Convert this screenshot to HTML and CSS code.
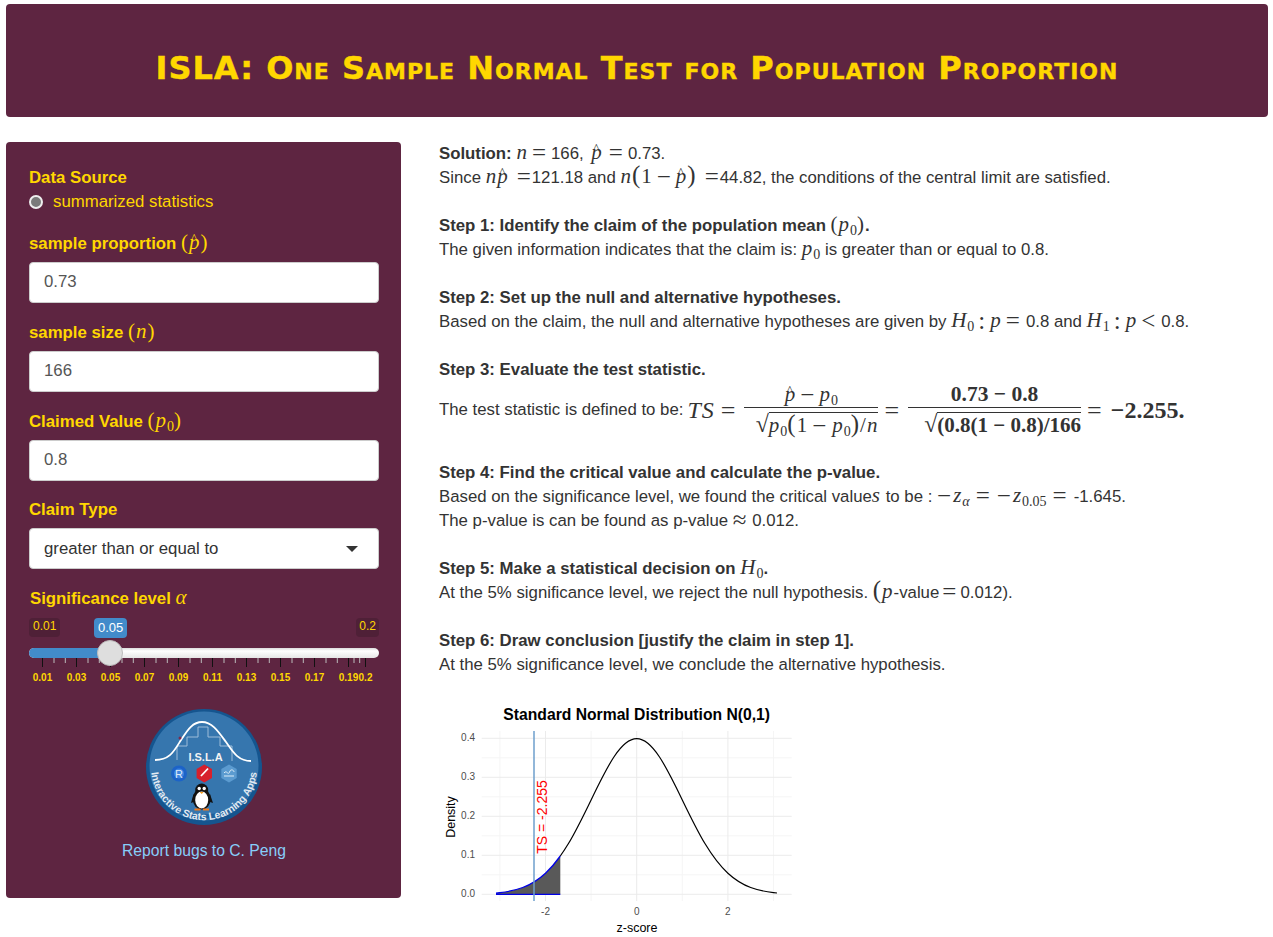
FILE: index.html
```html
<!DOCTYPE html>
<html lang="en">
<head>
<meta charset="utf-8">
<title>ISLA: One Sample Normal Test for Population Proportion</title>
<link rel="stylesheet" href="styles.css">
</head>
<body>
<header class="banner"><h1>ISLA: One Sample Normal Test for Population Proportion</h1></header>
<div class="layout">
  <aside class="panel">
    <div class="group-radio">
      <div class="lbl">Data Source</div>
      <div class="radio-row"><span class="radio"></span><span>summarized statistics</span></div>
    </div>
    <div class="group">
      <div class="lbl lbl-m">sample proportion <span class="m m-side"><span class="r">(</span><span class="hat">p</span><span class="r">)</span></span></div>
      <div class="input">0.73</div>
    </div>
    <div class="group">
      <div class="lbl lbl-m">sample size <span class="m m-side"><span class="r">(</span>n<span class="r">)</span></span></div>
      <div class="input">166</div>
    </div>
    <div class="group">
      <div class="lbl lbl-m">Claimed Value <span class="m m-side"><span class="r">(</span>p<sub class="s">0</sub><span class="r">)</span></span></div>
      <div class="input">0.8</div>
    </div>
    <div class="group group-select">
      <div class="lbl lbl-m lbl-select">Claim Type</div>
      <div class="input select"><span class="select-text">greater than or equal to</span><span class="caret"></span></div>
    </div>
    <div class="lbl lbl-m lbl-sig">Significance level <span class="m m-side">α</span></div>
    <div class="slider">
      <div class="bubbles">
        <span class="bubble">0.01</span>
        <span class="bubble bubble-on">0.05</span>
        <span class="bubble bubble-end">0.2</span>
      </div>
      <div class="track"><div class="track-fill"></div><div class="handle"></div></div>
      <svg class="ticks" viewBox="0 0 350 34" width="350" height="34">
        <path class="tick-minor" d="M25 0v5M36.300 0v5M59 0v5M70.300 0v5M93 0v5M104.300 0v5M127 0v5M138.300 0v5M161 0v5M172.300 0v5M195 0v5M206.300 0v5M229 0v5M240.300 0v5M263 0v5M274.300 0v5M297 0v5M308.300 0v5M325 0v5M330.700 0v5"/>
        <path class="tick-major" d="M13.500 0v9M47.500 0v9M81.500 0v9M115.500 0v9M149.500 0v9M183.500 0v9M217.500 0v9M251.500 0v9M285.500 0v9M319.500 0v9M336.500 0v9"/>
        <g class="tick-text">
          <text x="13.500" y="23">0.01</text><text x="47.500" y="23">0.03</text><text x="81.500" y="23">0.05</text><text x="115.500" y="23">0.07</text><text x="149.500" y="23">0.09</text><text x="183.500" y="23">0.11</text><text x="217.500" y="23">0.13</text><text x="251.500" y="23">0.15</text><text x="285.500" y="23">0.17</text><text x="319.500" y="23">0.19</text><text x="336.500" y="23">0.2</text>
        </g>
      </svg>
    </div>
    <svg class="logo" viewBox="0 0 116 116" width="116" height="116">
      <defs>
        <path id="arc" d="M6 48A53 53 0 1 0 110 48"/>
      </defs>
      <circle cx="58" cy="58" r="58" fill="#15558f"/>
      <circle cx="58" cy="57" r="54.500" fill="#3676ae"/>
      <path d="M12 84A54 54 0 0 0 104 84A60 60 0 0 1 12 84Z" fill="#1f619c"/>
      <path d="M31 51V37H41V28H52V18H62V28H74V37H86V52" fill="none" stroke="#9dbcd9" stroke-width="1"/>
      <path d="M9 51C24 51 28 42 35 31C41 22 46 13 56 13C66 13 72 22 80 33C87 43 92 52 105 52" fill="none" stroke="#fff" stroke-width="1.800"/>
      <circle cx="34" cy="29" r="1.500" fill="#7c2a4d"/>
      <text x="59.500" y="52" class="logo-title">I.S.L.A</text>
      <circle cx="33" cy="64.500" r="8" fill="#1c63c8"/>
      <circle cx="33" cy="64.500" r="5" fill="#3f86e0"/>
      <text x="33" y="68.500" class="logo-r">R</text>
      <path d="M58.300 55.500L66 60V69L58.300 73.500L50.600 69V60Z" fill="#d7202c"/>
      <path d="M55 67L62 59.500" stroke="#fff" stroke-width="1.800"/>
      <path d="M83 55.500L90.700 60V69L83 73.500L75.300 69V60Z" fill="#5b9bd0"/>
      <path d="M78 64C81 60 82 68 84 62C85 60 88 61 88 63M78 67H88" fill="none" stroke="#dcecf8" stroke-width="1"/>
      <text class="logo-arc"><textPath href="#arc" startOffset="50%">Interactive Stats Learning Apps</textPath></text>
      <ellipse cx="55.700" cy="90" rx="9" ry="10.500" fill="#111"/>
      <circle cx="55.700" cy="81" r="6.500" fill="#111"/>
      <path d="M47.500 85L45 94L50 92ZM64 85L67 94L61 92Z" fill="#111"/>
      <ellipse cx="55.700" cy="91" rx="6.500" ry="8.500" fill="#fff"/>
      <circle cx="53.200" cy="79.500" r="1.700" fill="#fff"/><circle cx="58.200" cy="79.500" r="1.700" fill="#fff"/>
      <path d="M53.700 83H57.700L55.700 85Z" fill="#f39a1c"/>
      <path d="M48.500 99.500H54.500V101.500H48.500ZM57 99.500H63V101.500H57Z" fill="#f07a1c"/>
    </svg>
    <div class="report">Report bugs to C. Peng</div>
  </aside>
  <main class="content">
    <p class="para"><b>Solution:</b> <span class="m">n</span><span class="m r op">=</span>166, <span class="m hat hat-g">p</span><span class="m r op">=</span>0.73.<br>
    Since <span class="m">n<span class="hat">p</span></span><span class="m r op op-l">=</span>121.18 and <span class="m">n<span class="r big">(</span><span class="r">1</span><span class="r op">−</span><span class="hat">p</span><span class="r big">)</span></span><span class="m r op op-l">=</span>44.82, the conditions of the central limit are satisfied.</p>
    <p class="para"><b>Step 1: Identify the claim of the population mean <span class="m m-b"><span class="r">(</span>p<sub class="s">0</sub><span class="r">)</span></span>.</b><br>
    The given information indicates that the claim is: <span class="m">p<sub class="s">0</sub></span> is greater than or equal to 0.8.</p>
    <p class="para"><b>Step 2: Set up the null and alternative hypotheses.</b><br>
    Based on the claim, the null and alternative hypotheses are given by <span class="m">H<sub class="s">0</sub><span class="r op">:</span>p<span class="r op op-n">=</span></span>0.8 and <span class="m">H<sub class="s">1</sub><span class="r op">:</span>p<span class="r op op-n">&lt;</span></span>0.8.</p>
    <div class="para">
      <div class="line"><b>Step 3: Evaluate the test statistic.</b></div>
      <div class="formula">
        <span>The test statistic is defined to be:</span>
        <span class="m m-f">TS</span><span class="m r m-f fop">=</span><span class="frac frac-a">
          <span class="num"><span class="m hat">p</span><span class="m r op">−</span><span class="m">p<sub class="s">0</sub></span></span>
          <span class="den"><span class="rad m r">√</span><span class="under m">p<sub class="s">0</sub><span class="r big">(</span><span class="r">1</span><span class="r op op-n">−</span>p<sub class="s">0</sub><span class="r big">)</span><span class="r">/</span>n</span></span>
        </span><span class="m r m-f fop">=</span><span class="frac frac-b">
          <span class="num m r strong tight">0.73 − 0.8</span>
          <span class="den"><span class="rad m r">√</span><span class="under m r strong tight">(0.8(1 − 0.8)/166</span></span>
        </span><span class="m r m-f fop">=</span><span class="m r m-f strong tight fnum">−2.255.</span>
      </div>
    </div>
    <p class="para"><b>Step 4: Find the critical value and calculate the p-value.</b><br>
    Based on the significance level, we found the critical value<span class="m">s</span> to be : <span class="m"><span class="r minus">−</span>z<sub class="s s-i">α</sub><span class="r op op-w">=</span><span class="r minus">−</span>z<sub class="s">0.05</sub><span class="r op op-w">=</span></span>-1.645.<br>
    The p-value is can be found as p-value <span class="m r wide">≈</span> 0.012.</p>
    <p class="para"><b>Step 5: Make a statistical decision on <span class="m m-b">H<sub class="s">0</sub></span>.</b><br>
    At the 5% significance level, we reject the null hypothesis. <span class="m"><span class="r big">(</span>p</span>-value<span class="m r op op-t">=</span>0.012).</p>
    <p class="para"><b>Step 6: Draw conclusion [justify the claim in step 1].</b><br>
    At the 5% significance level, we conclude the alternative hypothesis.</p>
    <svg class="plot" viewBox="439 700 361 237" width="361" height="237">
      <path class="grid-minor" d="M481.700 873.800H791.700M481.700 834.800H791.700M481.700 795.800H791.700M481.700 756.800H791.700M499.900 730V900M591.100 730V900M682.300 730V900M773.500 730V900"/>
      <path class="grid-major" d="M481.700 893.300H791.700M481.700 854.300H791.700M481.700 815.300H791.700M481.700 776.300H791.700M481.700 737.300H791.700M545.500 730V900M636.700 730V900M727.900 730V900"/>
      <path fill="#595959" d="M496 892.200L499.900 891.600C507.500 890.740 515.100 889.340 522.700 886.500C530.300 883.660 537.900 879.220 545.500 872.200C550.430 867.640 555.370 861.930 560.300 855V893.300H496Z"/>
      <path fill="none" stroke="#000" stroke-width="1.200" d="M560.300 855C562.970 851.250 565.630 847.230 568.300 842.800C575.900 830.170 583.500 814.630 591.100 798.900C598.700 783.170 606.300 767.440 613.900 756C621.500 744.560 629.100 737.700 636.700 737.700C644.300 737.700 651.900 744.560 659.500 756C667.100 767.440 674.700 783.170 682.300 798.900C689.900 814.630 697.500 830.170 705.100 842.800C712.700 855.430 720.300 865.180 727.900 872.200C735.500 879.220 743.100 883.660 750.700 886.500C758.300 889.340 765.900 890.740 773.500 891.600L777 892"/>
      <path fill="none" stroke="#0000e6" stroke-width="1.300" d="M496 892.200L499.900 891.600C507.500 890.740 515.100 889.340 522.700 886.500C530.300 883.660 537.900 879.220 545.500 872.200C550.430 867.640 555.370 861.930 560.300 855M496 893.300H560.300"/>
      <path fill="none" stroke="#6e9fcc" stroke-width="1.500" d="M534 730V900"/>
      <g class="ax-y"><text x="475" y="896">0.0</text><text x="475" y="857">0.1</text><text x="475" y="818">0.2</text><text x="475" y="779">0.3</text><text x="475" y="740">0.4</text></g>
      <g class="ax-x"><text x="545.500" y="914">-2</text><text x="636.700" y="914">0</text><text x="727.900" y="914">2</text></g>
      <text class="plot-title" x="636.700" y="719">Standard Normal Distribution N(0,1)</text>
      <text class="ax-name" x="637" y="931">z-score</text>
      <text class="ax-name" transform="translate(455 816) rotate(-90)">Density</text>
      <text class="plot-ts" transform="translate(547 816) rotate(-90)">TS = -2.255</text>
    </svg>
  </main>
</div>
</body>
</html>
```

FILE: styles.css
```css
* { box-sizing: border-box; }
html, body { margin: 0; padding: 0; }
body {
  background: #fff;
  color: #333;
  font-family: "Liberation Sans", Arial, sans-serif;
  font-size: 16.800px;
  line-height: 24px;
  width: 1273px;
  height: 937px;
  overflow: hidden;
  padding: 4px 5px 0 6px;
}
.banner {
  height: 113px;
  background: #5e2541;
  border-radius: 4px;
  padding-top: 14px;
  display: flex;
  align-items: center;
  justify-content: center;
}
.banner h1 {
  margin: 0;
  color: #ffd700;
  font-family: "DejaVu Sans", Verdana, sans-serif;
  font-variant: small-caps;
  font-weight: 700;
  font-size: 32px;
  letter-spacing: 1px;
  line-height: 36px;
  -webkit-text-stroke: .4px #ffd700;
}
.layout {
  display: flex;
  margin-top: 25px;
  align-items: flex-start;
}
.panel {
  width: 395px;
  height: 756px;
  flex: none;
  background: #5e2541;
  border-radius: 4px;
  padding: 24px 22px 0 23px;
  color: #ffd700;
  display: flex;
  flex-direction: column;
}
.group-radio { height: 63px; }
.lbl { font-weight: 700; line-height: 23px; }
.lbl-m { height: 28px; line-height: 29px; margin-bottom: 5px; }
.lbl-select { margin-bottom: 4px; line-height: 28px; }
.radio-row { display: flex; align-items: center; gap: 10px; line-height: 24px; margin-top: 1px; }
.radio {
  width: 14px;
  height: 14px;
  border-radius: 50%;
  background: #7a7a7a;
  border: 2px solid #eee;
}
.group { margin-bottom: 15px; }
.group-select { margin-bottom: 16px; }
.input {
  height: 41px;
  background: #fff;
  border: 1px solid #ccc;
  border-radius: 4px;
  color: #555;
  padding: 0 14px;
  line-height: 38px;
}
.select { display: flex; justify-content: space-between; align-items: center; color: #333; }
.select-text { line-height: 38px; }
.caret {
  width: 0;
  height: 0;
  border-left: 6.500px solid transparent;
  border-right: 6.500px solid transparent;
  border-top: 6px solid #333;
  margin-right: 6px;
}
.lbl-sig { margin-bottom: 0; padding-left: 1px; line-height: 27px; }
.slider { position: relative; height: 80px; padding-top: 5px; }
.bubbles { display: flex; justify-content: space-between; position: relative; height: 20px; }
.bubble {
  background: #4f2037;
  border-radius: 4px;
  font-size: 12px;
  line-height: 16px;
  height: 19px;
  padding: 0 4px;
  color: #ffd700;
}
.bubble-on {
  position: absolute;
  left: 65px;
  background: #428bca;
  color: #fff;
  height: 20px;
  line-height: 19px;
  padding: 0 4px;
  font-size: 13px;
}
.bubble-end { padding: 0 3px; margin-left: auto; }
.track {
  position: relative;
  height: 10px;
  margin-top: 10px;
  border-radius: 5px;
  background: linear-gradient(#dcdcdc, #fff 30%, #e6e6e6);
}
.track-fill {
  width: 81px;
  height: 10px;
  background: #428bca;
  border-radius: 5px 0 0 5px;
}
.handle {
  position: absolute;
  left: 68px;
  top: -8px;
  width: 26px;
  height: 26px;
  border-radius: 50%;
  background: #dedede;
  border: 1px solid #bdbdbd;
}
.ticks { display: block; }
.tick-major { stroke: #111; fill: none; }
.tick-minor { stroke: #bbb; fill: none; }
.tick-text text {
  fill: #ffd700;
  font-size: 10px;
  font-weight: 700;
  text-anchor: middle;
}
.logo { display: block; margin: 16px 0 0 117px; flex: none; }
.logo-title { fill: #f3f3f3; font-size: 11px; font-weight: 700; text-anchor: middle; }
.logo-r { fill: #dfe9f7; font-size: 11px; text-anchor: middle; font-family: "Liberation Sans", sans-serif; }
.logo-arc { fill: #e2eaf2; font-size: 10.400px; font-weight: 700; text-anchor: middle; }
.report {
  color: #87cefa;
  font-size: 15.700px;
  text-align: center;
  margin-top: 14px;
}
.content {
  margin-left: 38px;
  flex: 1;
  display: flex;
  flex-direction: column;
  gap: 24px;
}
.para { margin: 0; }
.line { height: 24px; }
.formula {
  height: 55px;
  display: flex;
  align-items: center;
  white-space: pre;
}
.m {
  font-family: "Liberation Serif", "Times New Roman", serif;
  font-style: italic;
  font-size: 21px;
  letter-spacing: 1px;
  line-height: 0;
}
.m-side { font-weight: 400; }
.m-b { font-weight: 400; }
.m-f { margin-left: 4px; font-size: 24px; line-height: 24px; }
.fop { margin: 2px 8px 0 6px; font-size: 26px; }
.r { font-style: normal; font-weight: 400; }
.strong { font-weight: 700; }
.tight { letter-spacing: 0; }
.big { font-size: 25px; line-height: 0; }
.op { margin: 0 4px; font-size: 25px; vertical-align: -1.500px; }
.op-l { margin-right: 0; margin-left: 8px; }
.op-n { margin-right: 5px; }
.op-w { margin: 0 6px; }
.op-t { margin: 0 3px; }
.minus { font-size: 25px; margin-right: 1px; vertical-align: -1.500px; }
.wide { font-size: 25px; vertical-align: -1.500px; }
.fnum { margin-left: 0; }
.s { font-size: 14px; line-height: 0; vertical-align: -4px; letter-spacing: 0; font-style: normal; }
.s-i { font-style: italic; }
.hat { position: relative; display: inline-block; line-height: 16px; }
.hat-g { margin-left: 3px; margin-right: 2px; }
.hat::before {
  content: "^";
  position: absolute;
  left: 2px;
  top: -4px;
  font-style: normal;
  font-size: 13px;
}
.frac {
  display: inline-flex;
  flex-direction: column;
  align-items: center;
}
.frac-a { width: 134px; }
.frac-b { width: 173px; }
.num {
  line-height: 26px;
  height: 27px;
  width: 100%;
  text-align: center;
  border-bottom: 1px solid #333;
  font-size: 21.500px;
}
.den { line-height: 28px; height: 30px; display: flex; align-items: flex-end; justify-content: flex-end; width: 100%; }
.rad { font-size: 24px; line-height: 28px; letter-spacing: 0; }
.under { line-height: 24px; height: 26px; margin-top: 1px; border-top: 1px solid #333; white-space: pre; }
.plot { display: block; flex: none; }
.plot text { font-family: "Liberation Sans", sans-serif; }
.grid-major { stroke: #ebebeb; stroke-width: 1; fill: none; }
.grid-minor { stroke: #f5f5f5; stroke-width: 1; fill: none; }
.ax-y text { fill: #4d4d4d; font-size: 10px; text-anchor: end; }
.ax-x text { fill: #4d4d4d; font-size: 10px; text-anchor: middle; }
.plot-title { font-size: 15.700px; font-weight: 700; text-anchor: middle; fill: #000; }
.ax-name { font-size: 12.500px; text-anchor: middle; fill: #000; }
.plot-ts { font-size: 14px; text-anchor: middle; fill: #f00; }
```
